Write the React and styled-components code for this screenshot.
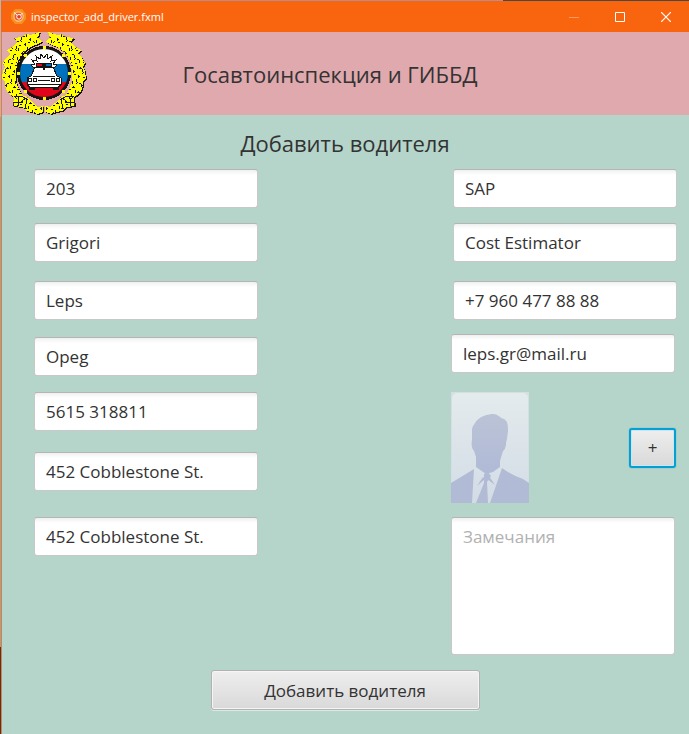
import React from 'react';
import styled, { createGlobalStyle } from 'styled-components';

const Global = createGlobalStyle`
  * { box-sizing: border-box; }
  body { margin: 0; background: #b5d4ca; font-family: "Open Sans", "Noto Sans", sans-serif; color: #333; }
  button, input, textarea { font-family: inherit; color: inherit; }
`;

const Window = styled.div`
  display: flex;
  flex-direction: column;
  min-height: 100vh;
  border-left: 1px solid #8fa79c;
  border-image: linear-gradient(#b9b3b3 16%, #8fa79c 16% 88%, #3b3b3b 88%) 1;
  box-shadow: inset 1px 0 #ec7a3c;
`;

const TitleBar = styled.header`
  display: flex;
  align-items: center;
  height: 32px;
  padding: 1px 0 0 9px;
  background: linear-gradient(90deg, #b98c90 73%, #484848 73%) 0 0 / 100% 1px no-repeat, #f9650f;
  color: #fff;
`;

const FileName = styled.span`
  flex: 1;
  margin-left: 4px;
  font-size: 11px;
  line-height: 16px;
`;

const WindowButton = styled.button`
  display: grid;
  place-items: center;
  width: 46px;
  height: 31px;
  padding: 0;
  border: 0;
  background: none;
  opacity: ${({ disabled }) => (disabled ? 0.35 : 1)};
`;

const Banner = styled.div`
  display: grid;
  grid-template-columns: 86px 1fr 117px;
  align-items: center;
  height: 83px;
  margin-left: 1px;
  background: #e0a9ae;
`;

const BannerTitle = styled.h1`
  margin: 0;
  font-size: 22px;
  line-height: 32px;
  font-weight: 400;
  text-align: center;
`;

const Form = styled.form`
  display: flex;
  flex-direction: column;
  align-items: center;
  padding: 12px 0 24px;
`;

const FormTitle = styled.h2`
  margin: 0 0 10px;
  font-size: 22px;
  line-height: 32px;
  font-weight: 400;
`;

const Columns = styled.div`
  display: flex;
  justify-content: space-between;
  gap: 16px;
  width: 100%;
  padding: 0 12px 0 33px;
`;

const Column = styled.div`
  display: flex;
  flex-direction: column;
  flex: 0 1 ${({ $width }) => $width}px;
  min-width: 0;
`;

const TextField = styled.input`
  width: 100%;
  max-width: 224px;
  height: 39px;
  margin: 0 0 ${({ $after }) => $after}px;
  padding: 0 11px;
  border: 1px solid #c8c8c8;
  border-top-color: #b5b5b5;
  border-radius: 3px;
  background: linear-gradient(#f0f0f0, #fff 5px);
  font-size: 17px;
  align-self: ${({ $align }) => $align || 'flex-start'};
`;

const PhotoRow = styled.div`
  display: flex;
  align-items: center;
  justify-content: space-between;
  width: 100%;
  max-width: 225px;
  height: 111px;
  margin-bottom: 14px;
`;

const Button = styled.button`
  height: 40px;
  border: 1px solid #b2b2b2;
  border-radius: 3px;
  background: linear-gradient(#eeeeee, #d9d9d9);
  box-shadow: inset 0 0 0 1px #f5f5f5, 0 1px #dce8e4;
  font-size: 17px;
`;

const AddPhotoButton = styled(Button)`
  width: 47px;
  padding: 0;
  border: 2px solid #049fd3;
  box-shadow: inset 0 0 0 1px #cfe4ee, 0 0 1px #049fd3;
  font-size: 17px;
`;

const SubmitButton = styled(Button)`
  width: 269px;
  max-width: 100%;
  margin-top: 15px;
`;

const Notes = styled.textarea`
  width: 100%;
  max-width: 224px;
  height: 138px;
  padding: 6px 11px;
  border: 1px solid #c8c8c8;
  border-top-color: #b5b5b5;
  border-radius: 3px;
  background: linear-gradient(#f0f0f0, #fff 5px);
  font-size: 17px;
  line-height: 26px;
  resize: none;
  &::placeholder { color: #b1b1b1; opacity: 1; }
`;

function AppIcon() {
  return (
    <svg width="17" height="17" viewBox="0 0 17 17" aria-hidden="true">
      <path d="M5 1h7l4 5v5l-4 5H5l-4-5V6Z" fill="#f5921e" />
      <circle cx="8.5" cy="8.5" r="4.6" fill="#ee5a26" stroke="#ffc48f" strokeWidth="1.2" />
      <circle cx="9" cy="8.800" r="2.300" fill="#e8391f" stroke="#fff" strokeWidth="1" />
      <path d="M4 4.500l3 2.500M12.500 5l-2 2" stroke="#fff" fill="none" />
    </svg>
  );
}

const branch =
  'M38 0L28 3L25 2L20 5L12 6L15 10L12 14L5 18L8 22L4 26L1 31L3 35L1 39L0 46L3 50L3 54L5 59L8 63L12 65L11 74L20 75L24 79L30 80L35 82L41 80V74L36 75L31 71L25 65L20 63L17 57L14 50V39L16 29L22 20L29 15L36 12L40 10L36 5Z';

const grains = Array.from({ length: 21 * 11 }, (_, i) => {
  const row = Math.floor(i / 11);
  const column = i % 11;
  const x = column * 4 + ((row * 3 + column * column) % 4);
  const y = row * 4 + ((column * 3 + row * row) % 4);
  const shape = (column + row * 2) % 3;
  return shape === 0 ? `M${x} ${y}h1v3h-1Z` : shape === 1 ? `M${x} ${y}h2v1h-2Z` : `M${x} ${y}h1v1h1v1h-1v-1h-1Z`;
}).join('');

function Branch() {
  return (
    <>
      <path d={branch} fill="#ff0" />
      <path d={grains} fill="#161410" clipPath="url(#branch)" />
      <path d="M12 65l8-1 5 4-2 8M16 66v8M11 70l10 1" fill="none" stroke="#161410" />
    </>
  );
}

function Emblem() {
  return (
    <svg width="86" height="83" viewBox="0 0 86 83" role="img" aria-label="ГИБДД" shapeRendering="crispEdges">
      <defs>
        <clipPath id="branch"><path d={branch} /></clipPath>
        <clipPath id="disc"><circle cx="42" cy="41" r="24" /></clipPath>
      </defs>
      <path d={branch} fill="#161410" transform="translate(1 1)" />
      <Branch />
      <g transform="matrix(-1 0 0 1 84 0)">
        <path d={branch} fill="#161410" transform="translate(-1 1)" />
        <Branch />
      </g>
      <circle cx="42" cy="41" r="27" fill="#161410" />
      <g clipPath="url(#disc)">
        <path d="M16 14h52v18H16Z" fill="#fff" />
        <path d="M16 32h52v18H16Z" fill="#0071bc" />
        <path d="M16 50h52v18H16Z" fill="#e1051b" />
      </g>
      <path d="M41 14h3v3h-3zM41 65h3v3h-3zM15 40h3v3h-3zM66 40h3v3h-3zM22 22h3v3h-3zM60 22h3v3h-3zM22 58h3v3h-3zM60 58h3v3h-3z" fill="#ff0" />
      <path d="M33 37l-4-4 4-1-3-4 5 1-1-5 4 3 1-5 3 4 3-4 1 5 4-3-1 5 5-1-3 4 4 1-4 4Z" fill="#fff" stroke="#161410" />
      <path d="M33 35h18l4 9 4 2v7l-3 2H28l-3-2v-7l4-2Z" fill="#fff" stroke="#161410" />
      <path d="M34 31h16v4H34Z" fill="#161410" />
      <path d="M35 32h5v2h-5Z" fill="#e1051b" />
      <path d="M44 32h5v2h-5Z" fill="#0071bc" />
      <path d="M41 35h2v3h-2Z" fill="#161410" />
      <path d="M31 44.500h22M36 48.500h12M25 52.500h34" stroke="#161410" />
      <g fill="#fff" stroke="#161410">
        <circle cx="28" cy="48" r="2" />
        <circle cx="33" cy="48" r="2" />
        <circle cx="51" cy="48" r="2" />
        <circle cx="56" cy="48" r="2" />
      </g>
      <path d="M27 55h6v3h-6ZM51 55h6v3h-6Z" fill="#161410" />
    </svg>
  );
}

function Portrait() {
  return (
    <svg width="78" height="111" viewBox="0 0 78 111" role="img" aria-label="Фото водителя">
      <defs>
        <linearGradient id="paper" x2="0" y2="1"><stop stopColor="#e4ebed" /><stop offset="1" stopColor="#d3dce6" /></linearGradient>
        <linearGradient id="suit" x2="0" y2="1"><stop stopColor="#bac3d6" /><stop offset="1" stopColor="#b0bad6" /></linearGradient>
      </defs>
      <path d="M0 0h78v111H0Z" fill="#d3dfe3" />
      <rect x="1" y="1" width="76" height="110" rx="5" fill="url(#paper)" />
      <path d="M24 31C28 24 37 22 43 22C48 23 49 26 53 27C57 29 57 34 57 39L56 47C55 50 55 51 55 53C54 56 54 58 52 59L49 69V75L42 80L35 82L25 75V65L23 59C21 57 20 52 21 48V39C21 34 23 33 24 31Z" fill="url(#suit)" />
      <path d="M0 91Q10 85 23 77L21 111H0ZM51 76Q62 84 72 87L78 91V111H39ZM33 82L37 80L40 84L36 90L37 111H25L33 91ZM26 94L32 85L34 87ZM38 84L44 93L36 87Z" fill="#b2bbd6" />
    </svg>
  );
}

const leftFields = [
  ['Номер', '203', 15],
  ['Имя', 'Grigori', 19],
  ['Фамилия', 'Leps', 17],
  ['Отчество', 'Opeg', 16],
  ['Паспорт', '5615 318811', 21],
  ['Адрес регистрации', '452 Cobblestone St.', 26],
  ['Адрес проживания', '452 Cobblestone St.', 0],
];

const rightFields = [
  ['Компания', 'SAP', 15, 'flex-end'],
  ['Должность', 'Cost Estimator', 19, 'flex-end'],
  ['Телефон', '+7 960 477 88 88', 14, 'flex-end'],
  ['Почта', 'leps.gr@mail.ru', 19, 'flex-start'],
];

function Fields({ items }) {
  return items.map(([label, value, after, align]) => (
    <TextField key={label} aria-label={label} defaultValue={value} $after={after} $align={align} />
  ));
}

export default function App() {
  return (
    <Window>
      <Global />
      <TitleBar>
        <AppIcon />
        <FileName>inspector_add_driver.fxml</FileName>
        <WindowButton type="button" aria-label="Свернуть" disabled>
          <svg width="10" height="10"><path d="M0 5.500h10" stroke="#fff" /></svg>
        </WindowButton>
        <WindowButton type="button" aria-label="Развернуть">
          <svg width="10" height="10"><path d="M.5.500h9v9h-9Z" stroke="#fff" fill="none" /></svg>
        </WindowButton>
        <WindowButton type="button" aria-label="Закрыть">
          <svg width="10" height="10"><path d="M0 0l10 10M10 0L0 10" stroke="#fff" strokeWidth="1.200" /></svg>
        </WindowButton>
      </TitleBar>
      <Banner>
        <Emblem />
        <BannerTitle>Госавтоинспекция и ГИББД</BannerTitle>
      </Banner>
      <Form onSubmit={(event) => event.preventDefault()}>
        <FormTitle>Добавить водителя</FormTitle>
        <Columns>
          <Column $width={224}>
            <Fields items={leftFields} />
          </Column>
          <Column $width={226}>
            <Fields items={rightFields} />
            <PhotoRow>
              <Portrait />
              <AddPhotoButton type="button" aria-label="Добавить фото">+</AddPhotoButton>
            </PhotoRow>
            <Notes aria-label="Замечания" placeholder="Замечания" />
          </Column>
        </Columns>
        <SubmitButton type="submit">Добавить водителя</SubmitButton>
      </Form>
    </Window>
  );
}
